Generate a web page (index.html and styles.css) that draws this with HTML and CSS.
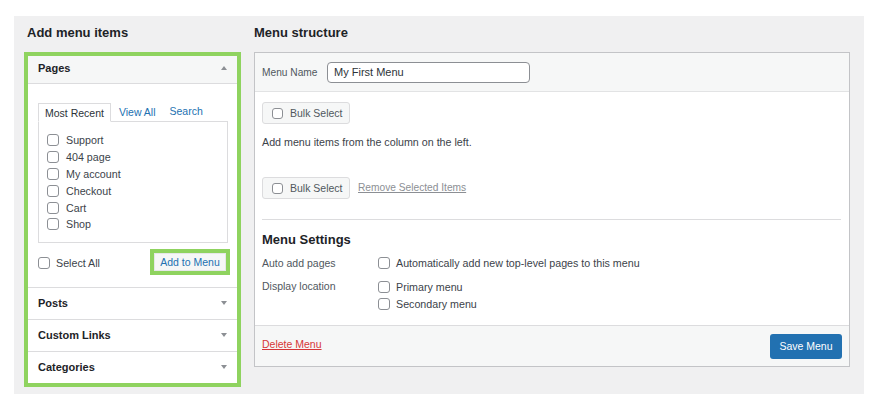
FILE: index.html
```html
<!DOCTYPE html>
<html lang="en">
<head>
<meta charset="utf-8">
<title>Menus</title>
<link rel="stylesheet" href="styles.css">
</head>
<body>
<div class="screen">
  <div class="col-left">
    <h2 class="col-title">Add menu items</h2>
    <div class="accordion">
      <section class="acc acc-open">
        <div class="acc-head"><span>Pages</span><span class="tri tri-up"></span></div>
        <div class="acc-body">
          <div class="tabs">
            <span class="tab tab-active">Most Recent</span>
            <span class="tab-link">View All</span>
            <span class="tab-link tab-search">Search</span>
          </div>
          <div class="tab-panel">
            <div class="item"><span class="cb"></span>Support</div>
            <div class="item"><span class="cb"></span>404 page</div>
            <div class="item"><span class="cb"></span>My account</div>
            <div class="item"><span class="cb"></span>Checkout</div>
            <div class="item"><span class="cb"></span>Cart</div>
            <div class="item"><span class="cb"></span>Shop</div>
          </div>
          <div class="acc-actions">
            <div class="select-all"><span class="cb"></span>Select All</div>
            <div class="add-wrap"><span class="add-btn">Add to Menu</span></div>
          </div>
        </div>
      </section>
      <section class="acc"><div class="acc-head"><span>Posts</span><span class="tri"></span></div></section>
      <section class="acc"><div class="acc-head"><span>Custom Links</span><span class="tri"></span></div></section>
      <section class="acc"><div class="acc-head"><span>Categories</span><span class="tri"></span></div></section>
    </div>
  </div>
  <div class="col-right">
    <h2 class="col-title">Menu structure</h2>
    <div class="menu-box">
      <div class="menu-head">
        <span class="label">Menu Name</span>
        <span class="name-input">My First Menu</span>
      </div>
      <div class="menu-body">
        <div class="bulk-row first"><span class="bulk-btn"><span class="cb cb-sm"></span>Bulk Select</span></div>
        <p class="hint">Add menu items from the column on the left.</p>
        <div class="bulk-row second"><span class="bulk-btn"><span class="cb cb-sm"></span>Bulk Select</span><span class="remove-link">Remove Selected Items</span></div>
        <div class="sep"></div>
        <h3 class="settings-title">Menu Settings</h3>
        <div class="setting auto">
          <span class="setting-label">Auto add pages</span>
          <div class="setting-opts">
            <div class="opt"><span class="cb"></span>Automatically add new top-level pages to this menu</div>
          </div>
        </div>
        <div class="setting display">
          <span class="setting-label">Display location</span>
          <div class="setting-opts">
            <div class="opt"><span class="cb"></span>Primary menu</div>
            <div class="opt"><span class="cb"></span>Secondary menu</div>
          </div>
        </div>
      </div>
      <div class="menu-foot">
        <span class="delete-link">Delete Menu</span>
        <span class="save-btn">Save Menu</span>
      </div>
    </div>
  </div>
</div>
</body>
</html>
```
FILE: styles.css
```css
* { box-sizing: border-box; }
html, body { margin: 0; padding: 0; background: #ffffff; }
body {
  font-family: "Liberation Sans", Arial, sans-serif;
  color: #3c434a;
  font-size: 10.7px;
}
.screen {
  margin: 16px 0 0 14px;
  width: 850px;
  height: 378px;
  background: #f0f0f1;
  display: flex;
  gap: 13px;
  padding: 0 14px 0 10px;
}
.col-left { width: 217px; flex: none; }
.col-right { flex: 1; }
.col-title {
  margin: 0;
  height: 36px;
  line-height: 34px;
  font-size: 13px;
  font-weight: 700;
  color: #1d2327;
  padding-left: 3px;
}
.col-right .col-title { padding-left: 0; }

/* accordion */
.accordion {
  border: 4px solid #8fd35f;
  background: #fff;
  height: 335px;
}
.acc-head {
  height: 31px;
  display: flex;
  align-items: center;
  justify-content: space-between;
  padding: 0 10px 2px 10px;
  font-size: 11px;
  font-weight: 700;
  color: #1d2327;
}
.acc + .acc { border-top: 1px solid #dcdcde; }
.acc-open .acc-head {
  height: 28px;
  background: #f6f7f7;
  border-bottom: 1px solid #dcdcde;
  padding-bottom: 3px;
}
.tri {
  width: 0; height: 0;
  border-left: 3.5px solid transparent;
  border-right: 3.5px solid transparent;
  border-top: 4px solid #8c8f94;
}
.tri-up { border-top: none; border-bottom: 4px solid #8c8f94; }
.acc-body {
  height: 203px;
  padding: 19px 9px 0 10px;
}
.tabs {
  display: flex;
  align-items: flex-start;
  height: 19px;
  position: relative;
  z-index: 1;
}
.tab {
  height: 19px;
  line-height: 19px;
  padding: 0 6px 0 6px;
  border: 1px solid #dcdcde;
  border-bottom: 1px solid #fff;
  background: #fff;
  font-size: 10.5px;
  color: #2c3338;
  margin-right: 8px;
}
.tab-link {
  color: #2271b1;
  font-size: 10.5px;
  line-height: 19px;
  height: 19px;
}
.tab-search { margin-left: 14px; line-height: 17px; }
.tab-panel {
  margin-top: -1px;
  height: 122px;
  border: 1px solid #dcdcde;
  padding: 10px 0 0 8px;
}
.item {
  height: 16.8px;
  display: flex;
  align-items: center;
  font-size: 10.7px;
  color: #3c434a;
}
.cb {
  display: inline-block;
  width: 12px;
  height: 12px;
  border: 1px solid #8c8f94;
  border-radius: 3px;
  background: #fff;
  margin-right: 7px;
  flex: none;
}
.acc-actions {
  margin-top: 6px;
  display: flex;
  align-items: center;
  justify-content: space-between;
  margin-right: -2px;
  padding-top: 1px;
}
.select-all {
  display: flex;
  align-items: center;
  font-size: 10.7px;
  color: #3c434a;
}
.select-all .cb { margin-right: 6px; }
.add-wrap {
  border: 4px solid #8fd35f;
  height: 26px;
  width: 80px;
  margin-top: -1px;
}
.add-btn {
  display: block;
  height: 18px;
  line-height: 17px;
  text-align: center;
  background: #f6f7f7;
  border: 1px solid #e6e7e8;
  color: #2271b1;
  font-size: 10.5px;
}

/* menu box */
.menu-box {
  border: 1px solid #c3c4c7;
  background: #fff;
  height: 315px;
  display: flex;
  flex-direction: column;
}
.menu-head {
  height: 39px;
  background: #f6f7f7;
  border-bottom: 1px solid #e2e3e4;
  display: flex;
  align-items: center;
  padding: 0 7px;
}
.label { font-size: 10.2px; color: #50575e; width: 65px; }
.name-input {
  width: 203px;
  height: 21px;
  border: 1px solid #8c8f94;
  border-radius: 4px;
  background: #fff;
  line-height: 19px;
  padding-left: 6px;
  font-size: 11px;
  color: #2c3338;
}
.menu-body {
  flex: 1;
  padding: 0 8px 0 7px;
}
.bulk-row { display: flex; align-items: center; }
.bulk-row.first { margin-top: 10px; }
.bulk-row.second { margin-top: 28px; }
.bulk-btn {
  display: flex;
  align-items: center;
  width: 88px;
  height: 22px;
  background: #f6f7f7;
  border: 1px solid #dcdcde;
  border-radius: 3px;
  padding-left: 9px;
  font-size: 10.5px;
  color: #50575e;
}
.cb-sm { width: 11px; height: 11px; margin-right: 7px; }
.remove-link {
  margin-left: 8px;
  color: #8c8f94;
  text-decoration: underline;
  font-size: 10.2px;
  margin-top: -1px;
}
.hint {
  margin: 11px 0 0 0;
  line-height: 14px;
  font-size: 10.7px;
  color: #3c434a;
}
.sep {
  margin-top: 20px;
  border-top: 1px solid #dcdcde;
}
.settings-title {
  margin: 11px 0 0 0;
  line-height: 18px;
  font-size: 13px;
  font-weight: 700;
  color: #1d2327;
}
.setting { display: flex; }
.setting.auto { margin-top: 6px; }
.setting.display { margin-top: 7px; }
.setting-label {
  width: 116px;
  line-height: 17px;
  font-size: 10.5px;
  color: #50575e;
}
.opt {
  display: flex;
  align-items: center;
  height: 17px;
  font-size: 10.7px;
  color: #3c434a;
}
.setting.auto .opt { height: 16px; }
.setting.auto .setting-label { line-height: 16px; }
.opt .cb { margin-right: 6px; }
.menu-foot {
  height: 41px;
  background: #f6f7f7;
  border-top: 1px solid #dcdcde;
  display: flex;
  align-items: center;
  justify-content: space-between;
  padding: 0 7px 0 7px;
}
.delete-link {
  color: #d63638;
  text-decoration: underline;
  font-size: 10.5px;
  margin-top: -4px;
}
.save-btn {
  width: 72px;
  height: 25px;
  line-height: 25px;
  text-align: center;
  background: #2271b1;
  color: #fff;
  border-radius: 3px;
  font-size: 10.5px;
}
```
